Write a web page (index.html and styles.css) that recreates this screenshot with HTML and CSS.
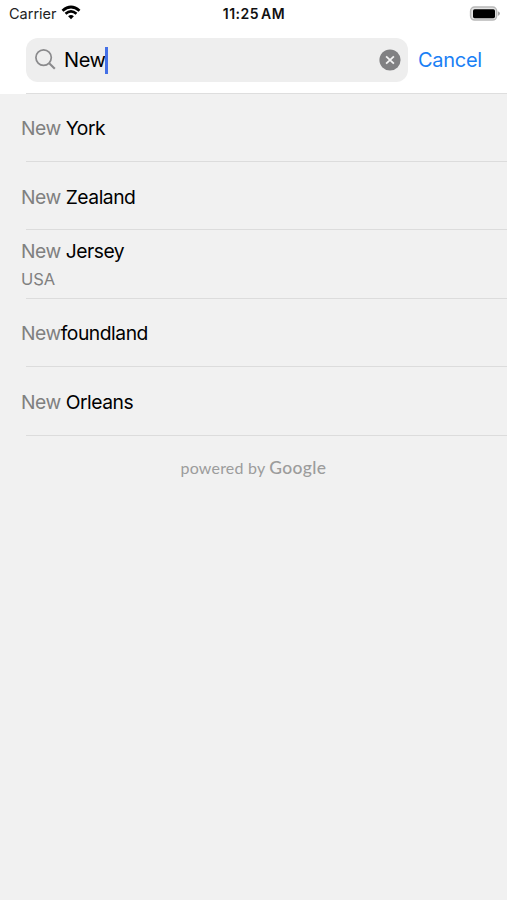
FILE: index.html
```html
<!DOCTYPE html>
<html lang="en">
<head>
    <meta charset="UTF-8">
    <meta name="viewport" content="width=device-width, initial-scale=1.0">
    <title>Place Search</title>
    <link rel="stylesheet" href="styles.css">
</head>
<body>
    <header>
        <div class="status-bar">
            <div class="carrier">
                <span>Carrier</span>
                <svg class="wifi" width="20" height="15" viewBox="0 0 20 15">
                    <path d="M1.5 5.7 Q10 -1.8 18.5 5.7" fill="none" stroke="#000" stroke-width="2.8"/>
                    <path d="M4.5 8.8 Q10 4 15.5 8.8" fill="none" stroke="#000" stroke-width="2.6"/>
                    <path d="M7.1 11.2 Q10 8.6 12.9 11.2 L10 14.2 Z" fill="#000"/>
                </svg>
            </div>
            <div class="clock">11:25 AM</div>
            <div class="battery">
                <svg width="32" height="16" viewBox="0 0 32 16">
                    <rect x="1.6" y="1.1" width="26" height="13" rx="4" fill="#e4e4e4" stroke="#b8b8b8" stroke-width="1.5"/>
                    <rect x="4" y="3.2" width="22" height="9" rx="1.6" fill="#000"/>
                    <path d="M28.9 5.3 Q31 6.2 31 7.6 Q31 9 28.9 9.9 Z" fill="#a8a8a8"/>
                </svg>
            </div>
        </div>
        <div class="search-bar">
            <div class="search-field">
                <svg class="search-icon" width="22" height="22" viewBox="0 0 22 22" fill="none" stroke="#8a8a8c" stroke-width="1.7">
                    <circle cx="8.6" cy="8.6" r="7.7"/>
                    <path d="M14.2 14.2 L19.8 19.8" stroke-width="2.1"/>
                </svg>
                <span class="query">New</span>
                <span class="caret"></span>
                <svg class="clear" width="22" height="22" viewBox="0 0 22 22">
                    <circle cx="11" cy="11" r="10.6" fill="#818183"/>
                    <path d="M7.1 7.3 L14.9 14.7 M14.9 7.3 L7.1 14.7" stroke="#f4f4f4" stroke-width="1.8"/>
                </svg>
            </div>
            <span class="cancel">Cancel</span>
        </div>
    </header>
    <ul class="results">
        <li><div class="place"><span class="match">New</span> York</div></li>
        <li><div class="place"><span class="match">New</span> Zealand</div></li>
        <li class="two-line">
            <div class="place"><span class="match">New</span> Jersey</div>
            <div class="region">USA</div>
        </li>
        <li><div class="place"><span class="match">New</span>foundland</div></li>
        <li><div class="place"><span class="match">New</span> Orleans</div></li>
    </ul>
    <footer class="powered">powered by <span class="google">Google</span></footer>
</body>
</html>
```
FILE: styles.css
```css
* {
    box-sizing: border-box;
}
body {
    font-family: Inter, "Liberation Sans", sans-serif;
    margin: 0;
    min-height: 900px;
    background-color: #f1f1f1;
    color: #000;
}
header {
    height: 94px;
    background-color: #fff;
}
.status-bar {
    display: grid;
    grid-template-columns: 1fr auto 1fr;
    align-items: center;
    height: 28px;
    padding: 0 6px 0 9px;
    font-size: 14.5px;
}
.carrier {
    display: flex;
    align-items: center;
    gap: 4px;
    margin-top: -1px;
    color: #222;
}
.wifi {
    margin-top: -2px;
}
.clock {
    margin: -2px 2px 0 0;
    font-size: 14px;
    font-weight: 600;
    letter-spacing: 0.5px;
    word-spacing: -2px;
    color: #111;
}
.battery {
    display: flex;
    justify-content: flex-end;
    margin-top: -1px;
}
.search-bar {
    display: flex;
    align-items: center;
    gap: 10px;
    padding: 10px 0 0 26px;
}
.search-field {
    display: flex;
    align-items: center;
    width: 382px;
    height: 44px;
    padding: 0 7px 0 9px;
    border-radius: 12px;
    background-color: #eee;
}
.query {
    margin-left: 7px;
    font-size: 20px;
    letter-spacing: -0.4px;
}
.caret {
    width: 3px;
    height: 27px;
    margin-left: -1px;
    background-color: #4470e6;
}
.clear {
    margin-left: auto;
}
.cancel {
    font-size: 20px;
    letter-spacing: -0.3px;
    color: #1a80f5;
}
.results {
    margin: -1px 0 0;
    padding: 0;
    list-style: none;
    background: linear-gradient(#dedede, #dedede) 26px 0 / 100% 1px no-repeat;
}
.results li {
    display: flex;
    flex-direction: column;
    justify-content: center;
    height: 68.4px;
    padding: 1px 0 0 21px;
    background: linear-gradient(#dcdcdc, #dcdcdc) 26px 100% / 100% 1px no-repeat;
}
.results li:first-child {
    height: 69px;
}
.results li.two-line {
    padding-top: 0;
}
.place {
    font-size: 19.3px;
    line-height: 28px;
    letter-spacing: -0.48px;
}
.match {
    color: #808080;
}
.region {
    font-size: 16.5px;
    line-height: 28px;
    color: #808080;
}
.powered {
    margin-top: 21px;
    text-align: center;
    font-family: Lato, sans-serif;
    font-size: 16px;
    line-height: 22px;
    letter-spacing: 0.2px;
    color: #9c9c9c;
}
.google {
    font-size: 17.5px;
    font-weight: 500;
    letter-spacing: 0.35px;
}
```
